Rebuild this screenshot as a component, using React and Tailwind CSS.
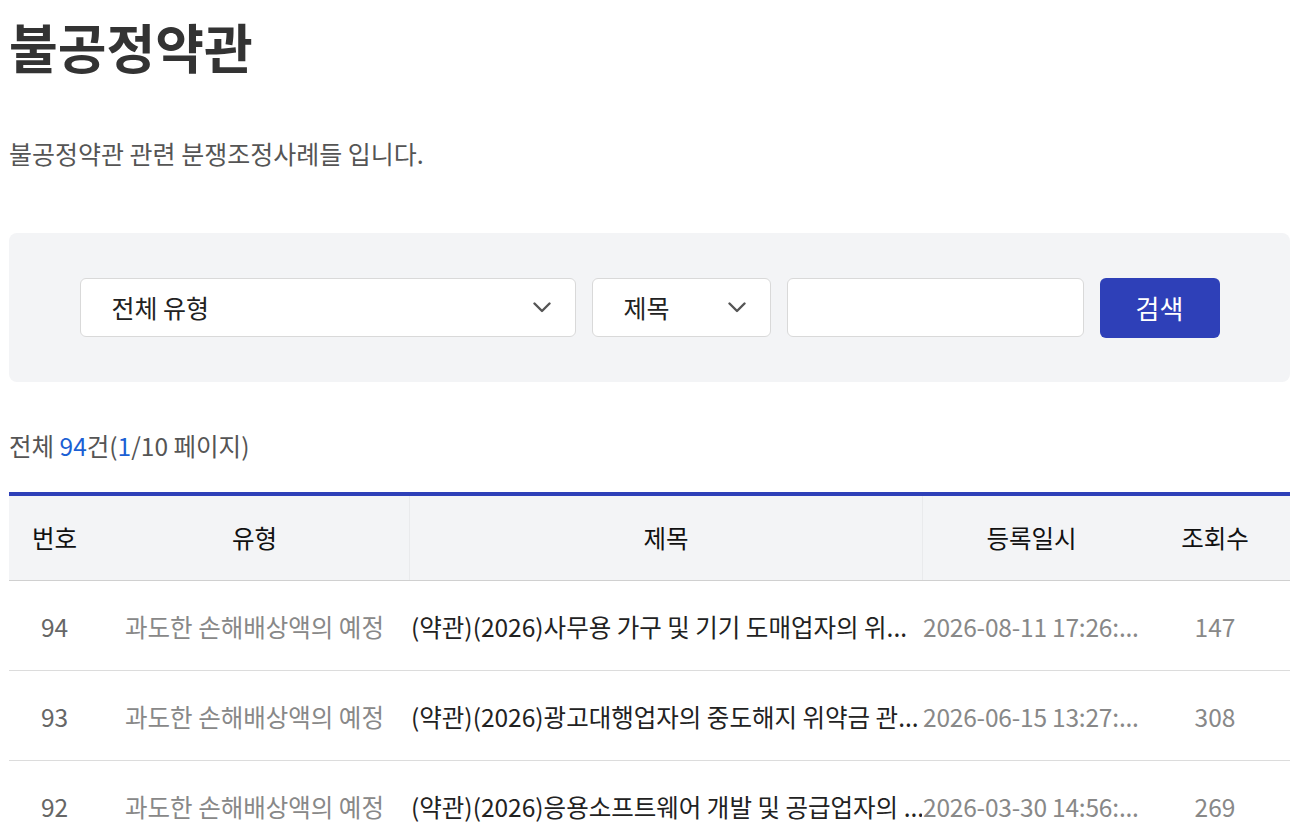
const rows = [
  { no: 94, type: '과도한 손해배상액의 예정', title: '(약관)(2026)사무용 가구 및 기기 도매업자의 위...', date: '2026-08-11 17:26:...', views: 147 },
  { no: 93, type: '과도한 손해배상액의 예정', title: '(약관)(2026)광고대행업자의 중도해지 위약금 관...', date: '2026-06-15 13:27:...', views: 308 },
  { no: 92, type: '과도한 손해배상액의 예정', title: '(약관)(2026)응용소프트웨어 개발 및 공급업자의 ...', date: '2026-03-30 14:56:...', views: 269 },
]

function Chevron() {
  return (
    <svg width="18" height="11" viewBox="0 0 18 11" fill="none">
      <path d="M1.5 1.5L9 9L16.5 1.5" stroke="#555" strokeWidth="2.4" strokeLinecap="round" strokeLinejoin="round" />
    </svg>
  )
}

export default function App() {
  return (
    <div className="w-[1290px] pl-[9px] bg-white text-[#333]" style={{ fontFamily: '"Noto Sans CJK KR", "Noto Sans", sans-serif' }}>
      <h1 className="pt-[10px] text-[53px] font-bold leading-[72px] text-[#333]">불공정약관</h1>

      <p className="mt-[56px] text-[25px] leading-[30px] text-[#555]">불공정약관 관련 분쟁조정사례들 입니다.</p>

      <div className="mt-[65px] h-[149px] rounded-lg bg-[#f3f4f6] flex items-center justify-center gap-4">
        <div className="w-[496px] h-[59px] rounded-md border border-[#d9d9d9] bg-white flex items-center justify-between pl-[31px] pr-[24px]">
          <span className="text-[25px] text-[#222]">전체 유형</span>
          <Chevron />
        </div>
        <div className="w-[179px] h-[59px] rounded-md border border-[#d9d9d9] bg-white flex items-center justify-between pl-[31px] pr-[24px]">
          <span className="text-[25px] text-[#222]">제목</span>
          <Chevron />
        </div>
        <div className="w-[297px] h-[59px] rounded-md border border-[#d9d9d9] bg-white" />
        <button className="w-[120px] h-[60px] rounded-md bg-[#2e40b8] text-white text-[26px]">검색</button>
      </div>

      <p className="mt-[49px] text-[24.5px] leading-[30px] text-[#555]">
        전체 <span className="text-[#1b5fd4]">94</span>건(<span className="text-[#1b5fd4]">1</span>/10 페이지)
      </p>

      <div className="mt-[31px] border-t-4 border-[#2e40b8]">
        <div className="grid grid-cols-[91px_309px_513px_218px_150px] h-[85px] bg-[#f3f4f6] border-b border-[#d0d0d0] text-[24.5px] text-[#111]">
          <div className="flex items-center justify-center">번호</div>
          <div className="flex items-center justify-center">유형</div>
          <div className="flex items-center justify-center border-l border-[#e9eaec]">제목</div>
          <div className="flex items-center justify-center border-l border-[#e9eaec]">등록일시</div>
          <div className="flex items-center justify-center">조회수</div>
        </div>
        {rows.map(r => (
          <div key={r.no} className="grid grid-cols-[91px_309px_513px_218px_150px] h-[90px] pt-[3px] border-b border-[#dcdcdc] text-[24.5px] items-center">
            <div className="text-center text-[#666]">{r.no}</div>
            <div className="text-center text-[#888] whitespace-nowrap overflow-hidden">{r.type}</div>
            <div className="pl-[2px] text-[#222] whitespace-nowrap overflow-hidden">{r.title}</div>
            <div className="pl-[1px] text-[#888] whitespace-nowrap tracking-[-0.2px]">{r.date}</div>
            <div className="text-center text-[#888]">{r.views}</div>
          </div>
        ))}
      </div>
    </div>
  )
}
